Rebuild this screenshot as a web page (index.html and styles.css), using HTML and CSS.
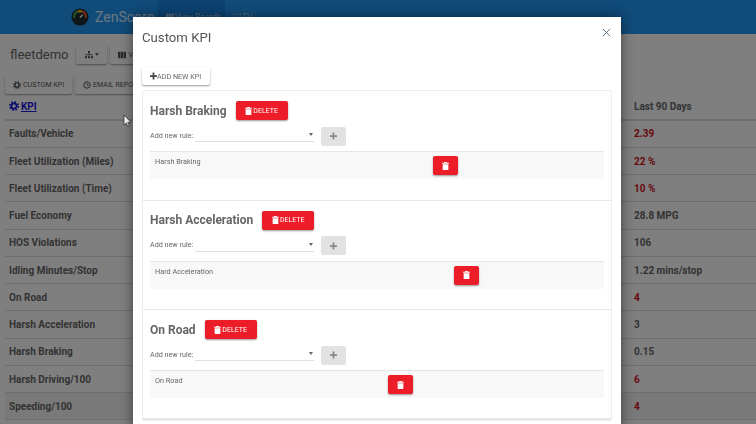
FILE: index.html
```html
<!DOCTYPE html>
<html lang="en">
  <head>
    <meta charset="UTF-8" />
    <title>Custom KPI</title>
    <link rel="stylesheet" href="styles.css">
  </head>
  <body>
    <svg class="icon-defs" width="0" height="0">
      <symbol id="trash" viewBox="0 0 12 14">
        <path d="M4 0h4l1 1.500h3v1.500H0V1.500h3zM1 4h10v9a1 1 0 0 1-1 1H2a1 1 0 0 1-1-1z" fill="currentColor" />
      </symbol>
      <symbol id="plus" viewBox="0 0 12 12">
        <path d="M4.500 0h3v4.500H12v3H7.500V12h-3V7.500H0v-3h4.500z" fill="currentColor" />
      </symbol>
      <symbol id="gear" viewBox="0 0 12 12">
        <circle cx="6" cy="6" r="3.200" fill="none" stroke="currentColor" stroke-width="2.200" />
        <circle cx="6" cy="6" r="5" fill="none" stroke="currentColor" stroke-width="2" stroke-dasharray="2 1.930" />
      </symbol>
      <symbol id="clock" viewBox="0 0 12 12">
        <circle cx="6" cy="6" r="4.800" fill="none" stroke="currentColor" stroke-width="1.500" />
        <path d="M6 3v3.300h2.500" fill="none" stroke="currentColor" stroke-width="1.200" />
      </symbol>
      <symbol id="columns" viewBox="0 0 12 12">
        <path d="M0 1h3.500v10H0zM4.250 1h3.500v10h-3.500zM8.500 1H12v10H8.500z" fill="currentColor" />
      </symbol>
      <symbol id="sitemap" viewBox="0 0 12 12">
        <path d="M4.500 0h3v3h-3zM0 8h3v3H0zM4.500 8h3v3h-3zM9 8h3v3H9zM5.500 3h1v2H11v3h-1V6H6.500v2h-1V6H2v2H1V5h4.500z" fill="currentColor" />
      </symbol>
      <symbol id="tv" viewBox="0 0 12 12">
        <path d="M.500 1.500h11v7.500H.500zM3 11h6" fill="none" stroke="currentColor" />
      </symbol>
    </svg>

    <div class="topbar">
      <div class="brand">
        <svg class="logo" viewBox="0 0 20 20">
          <circle cx="10" cy="10" r="9.500" fill="#1c2a33" />
          <path d="M3.500 11a6.500 6.500 0 0 1 4-7" stroke="#3fa34d" stroke-width="2.500" fill="none" />
          <path d="M7.500 4a6.500 6.500 0 0 1 5 0" stroke="#f2c029" stroke-width="2.500" fill="none" />
          <path d="M12.500 4a6.500 6.500 0 0 1 4 7" stroke="#e5502e" stroke-width="2.500" fill="none" />
          <path d="M10 10.500l3-3" stroke="#fff" stroke-width="1.500" />
        </svg>
        <span class="brand-name">ZenScore</span>
      </div>
      <div class="nav-item active"><svg class="ico"><use href="#columns" /></svg>View Boards</div>
      <div class="nav-item"><svg class="ico"><use href="#tv" /></svg>TV</div>
    </div>

    <div class="page-head">
      <h1>fleetdemo</h1>
      <button class="btn btn-tree"><svg class="ico"><use href="#sitemap" /></svg><i class="caret"></i></button>
      <button class="btn btn-view"><svg class="ico"><use href="#columns" /></svg>View</button>
    </div>
    <div class="page-actions">
      <button class="btn btn-custom"><svg class="ico"><use href="#gear" /></svg>CUSTOM KPI</button>
      <button class="btn btn-email"><svg class="ico"><use href="#clock" /></svg>EMAIL REPORT</button>
    </div>

    <div class="kpi-table">
      <div class="kpi-row head"><a class="kpi-link"><svg class="ico-gear"><use href="#gear" /></svg> KPI</a><span>Last 90 Days</span></div>
      <div class="kpi-row"><span>Faults/Vehicle</span><span class="bad">2.39</span></div>
      <div class="kpi-row"><span>Fleet Utilization (Miles)</span><span class="bad">22 %</span></div>
      <div class="kpi-row"><span>Fleet Utilization (Time)</span><span class="bad">10 %</span></div>
      <div class="kpi-row"><span>Fuel Economy</span><span>28.8 MPG</span></div>
      <div class="kpi-row"><span>HOS Violations</span><span>106</span></div>
      <div class="kpi-row"><span>Idling Minutes/Stop</span><span>1.22 mins/stop</span></div>
      <div class="kpi-row"><span>On Road</span><span class="bad">4</span></div>
      <div class="kpi-row"><span>Harsh Acceleration</span><span>3</span></div>
      <div class="kpi-row"><span>Harsh Braking</span><span>0.15</span></div>
      <div class="kpi-row"><span>Harsh Driving/100</span><span class="bad">6</span></div>
      <div class="kpi-row shaded"><span>Speeding/100</span><span class="bad">4</span></div>
    </div>

    <div class="backdrop"></div>

    <svg class="cursor" viewBox="0 0 8 12">
      <path d="M1 0v10l2.300-2 1.500 3.500 1.500-.7L4.800 7.400H8z" fill="#fff" stroke="#222" stroke-width=".7" />
    </svg>

    <div class="modal">
      <div class="modal-head">
        <h2>Custom KPI</h2>
        <svg class="close" viewBox="0 0 10 10">
          <path d="M1 1l8 8M9 1l-8 8" stroke="#4f6a80" stroke-width="1" fill="none" />
        </svg>
      </div>
      <button class="add-kpi"><svg class="ico"><use href="#plus" /></svg>ADD NEW KPI</button>

      <div class="kpi-list">
        <section class="kpi-card">
          <div class="card-head">
            <h3>Harsh Braking</h3>
            <button class="btn-delete"><svg class="ico"><use href="#trash" /></svg>DELETE</button>
          </div>
          <div class="rule-form">
            <label>Add new rule:</label>
            <div class="rule-select"><i class="caret"></i></div>
            <button class="btn-add"><svg class="ico"><use href="#plus" /></svg></button>
          </div>
          <div class="rule-row">
            <span class="rule-name">Harsh Braking</span>
            <button class="btn-trash offset-a"><svg class="ico"><use href="#trash" /></svg></button>
          </div>
        </section>

        <section class="kpi-card">
          <div class="card-head">
            <h3>Harsh Acceleration</h3>
            <button class="btn-delete"><svg class="ico"><use href="#trash" /></svg>DELETE</button>
          </div>
          <div class="rule-form">
            <label>Add new rule:</label>
            <div class="rule-select"><i class="caret"></i></div>
            <button class="btn-add"><svg class="ico"><use href="#plus" /></svg></button>
          </div>
          <div class="rule-row">
            <span class="rule-name">Hard Acceleration</span>
            <button class="btn-trash offset-b"><svg class="ico"><use href="#trash" /></svg></button>
          </div>
        </section>

        <section class="kpi-card">
          <div class="card-head">
            <h3>On Road</h3>
            <button class="btn-delete"><svg class="ico"><use href="#trash" /></svg>DELETE</button>
          </div>
          <div class="rule-form">
            <label>Add new rule:</label>
            <div class="rule-select"><i class="caret"></i></div>
            <button class="btn-add"><svg class="ico"><use href="#plus" /></svg></button>
          </div>
          <div class="rule-row">
            <span class="rule-name">On Road</span>
            <button class="btn-trash offset-c"><svg class="ico"><use href="#trash" /></svg></button>
          </div>
        </section>
      </div>
    </div>
  </body>
</html>
```

FILE: styles.css
```css
* {
  margin: 0;
  padding: 0;
  box-sizing: border-box;
}

html,
body {
  height: 424px;
  overflow: hidden;
}

body {
  font-family: Roboto, sans-serif;
  background-color: #fff;
  color: #666;
}

button {
  font-family: Roboto, sans-serif;
  border: none;
}

.icon-defs {
  display: block;
}

.ico {
  width: 7px;
  height: 8px;
  flex: none;
}

.topbar {
  height: 34px;
  background-color: #2196f3;
  display: flex;
  align-items: center;
  padding-left: 71px;
}

.brand {
  display: flex;
  align-items: center;
  gap: 6px;
  width: 87px;
  overflow: hidden;
}

.logo {
  width: 18px;
  height: 18px;
  flex: none;
}

.brand-name {
  font-size: 14px;
  color: #d8f0ff;
}

.nav-item {
  display: flex;
  align-items: center;
  gap: 1px;
  height: 34px;
  padding: 0 8px;
  font-size: 8.300px;
  color: #a8d4f5;
  width: 67px;
  white-space: nowrap;
}

.nav-item .ico {
  width: 8px;
}

.nav-item.active {
  background-color: #1a84e4;
}

.page-head {
  display: flex;
  align-items: center;
  height: 41px;
  padding: 0 10px;
}

.page-head h1 {
  font-size: 13px;
  font-weight: 400;
  color: #666;
  margin-right: 8px;
}

.btn {
  display: flex;
  align-items: center;
  gap: 2px;
  height: 19px;
  background-color: #fff;
  color: #555;
  font-size: 7.100px;
  border-radius: 2px;
  box-shadow: 0 1px 2px rgba(0, 0, 0, 0.4);
  white-space: nowrap;
}

.btn .ico {
  width: 8px;
}

.btn-tree {
  justify-content: center;
  width: 31px;
  margin-right: 3px;
}

.btn-tree .caret {
  position: static;
}

.btn-view {
  width: 60px;
  padding-left: 8px;
}

.btn-custom {
  width: 67px;
  padding-left: 8px;
}

.btn-email {
  width: 80px;
  padding-left: 8px;
}

.page-actions {
  display: flex;
  gap: 3px;
  padding: 0 5px;
  height: 19px;
}

.kpi-table {
  padding-left: 5px;
}

.kpi-row {
  height: 27.250px;
  display: grid;
  grid-template-columns: 625px 1fr;
  align-items: center;
  padding-left: 4px;
  font-size: 10px;
  font-weight: 700;
  color: #666;
  border-bottom: 1px solid #ddd;
}

.kpi-row.head {
  height: 26.700px;
  padding-bottom: 0.700px;
  border-bottom: 2px solid #ddd;
}

.kpi-row.shaded {
  background-color: #f2f2f2;
}

.kpi-link {
  display: flex;
  align-items: center;
  gap: 2px;
  color: #1a1ae0;
  text-decoration: underline;
}

.ico-gear {
  width: 10px;
  height: 10px;
}

.bad {
  color: #d0121b;
}

.backdrop {
  position: fixed;
  inset: 0;
  background-color: rgba(0, 0, 0, 0.5);
}

.cursor {
  position: fixed;
  left: 123px;
  top: 115px;
  width: 8px;
  height: 12px;
}

.modal {
  position: fixed;
  left: 133px;
  top: 17px;
  width: 488px;
  height: 420px;
  background-color: #fff;
  box-shadow: 0 0 12px rgba(0, 0, 0, 0.5);
  padding: 0 9px;
}

.modal-head {
  height: 50px;
  display: flex;
  justify-content: space-between;
  padding-top: 12px;
}

.modal-head h2 {
  font-size: 13.200px;
  font-weight: 400;
  color: #555;
  margin-top: 1px;
}

.close {
  width: 9px;
  height: 9px;
  margin: -1px 1px 0 0;
}

.add-kpi {
  display: flex;
  align-items: center;
  height: 18px;
  width: 68px;
  padding-left: 8px;
  background-color: #fff;
  color: #666;
  font-size: 7.200px;
  border-radius: 2px;
  box-shadow: 0 1px 2px rgba(0, 0, 0, 0.4);
}

.add-kpi .ico {
  color: #444;
}

.kpi-list {
  margin-top: 5px;
  width: 470px;
  border: 1px solid #eee;
  border-radius: 2px;
}

.kpi-card {
  height: 109.500px;
  padding: 9.500px 7px 0;
  border-bottom: 1px solid #e6e6e6;
}

.kpi-card:last-child {
  border-bottom: 2px solid #e6e6e6;
}

.card-head {
  display: flex;
  align-items: center;
  gap: 9px;
  height: 20px;
}

.card-head h3 {
  font-size: 12px;
  font-weight: 700;
  color: #666;
}

.btn-delete {
  display: flex;
  align-items: center;
  justify-content: center;
  gap: 1px;
  width: 52px;
  height: 19px;
  background-color: #ec1c28;
  color: #fff;
  font-size: 7px;
  border-radius: 2px;
  box-shadow: 0 1px 2px rgba(0, 0, 0, 0.4);
}

.rule-form {
  display: flex;
  align-items: center;
  margin-top: 5.500px;
  height: 20px;
}

.rule-form label {
  font-size: 7.200px;
  color: #666;
  width: 45px;
  margin-top: -2px;
}

.rule-select {
  position: relative;
  width: 119px;
  height: 13px;
  margin-top: -1px;
  border-bottom: 1px solid #e0e0e0;
}

.caret {
  position: absolute;
  right: 1px;
  top: 4px;
  border: 2.500px solid transparent;
  border-top: 3px solid #666;
  border-bottom: none;
}

.btn-add {
  display: flex;
  align-items: center;
  justify-content: center;
  width: 25px;
  height: 19px;
  margin-left: 7px;
  background-color: #e2e2e2;
  color: #888;
  border-radius: 2px;
}

.rule-row {
  display: flex;
  align-items: flex-start;
  height: 28px;
  margin-top: 5px;
  padding: 5px 5px;
  background-color: #f8f8f8;
  border-top: 1px solid #e6e6e6;
  font-size: 7.300px;
  color: #666;
}

.btn-trash {
  display: flex;
  align-items: center;
  justify-content: center;
  width: 25px;
  height: 19px;
  margin-top: -1px;
  background-color: #ec1c28;
  color: #fff;
  border-radius: 2px;
  box-shadow: 0 1px 2px rgba(0, 0, 0, 0.4);
}

.rule-name {
  width: 278px;
}

.offset-a {
  margin-left: 0;
}

.offset-b {
  margin-left: 21px;
}

.offset-c {
  margin-left: -45px;
}
```
